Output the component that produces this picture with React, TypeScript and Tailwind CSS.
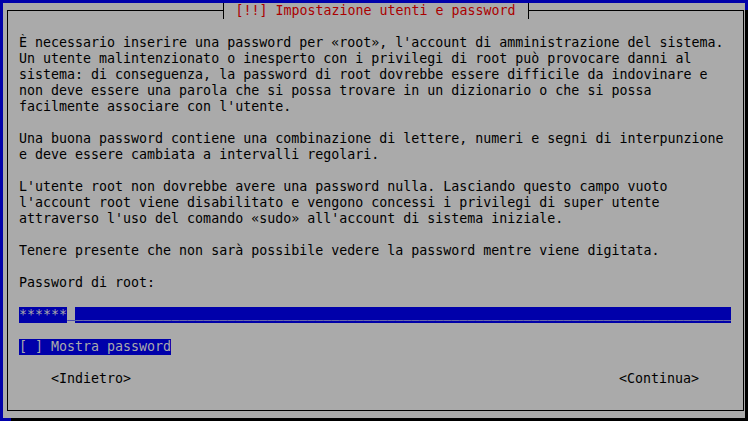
const intro = [
	"È necessario inserire una password per «root», l'account di amministrazione del sistema.",
	"Un utente malintenzionato o inesperto con i privilegi di root può provocare danni al",
	"sistema: di conseguenza, la password di root dovrebbe essere difficile da indovinare e",
	"non deve essere una parola che si possa trovare in un dizionario o che si possa",
	"facilmente associare con l'utente.",
	"",
	"Una buona password contiene una combinazione di lettere, numeri e segni di interpunzione",
	"e deve essere cambiata a intervalli regolari.",
	"",
	"L'utente root non dovrebbe avere una password nulla. Lasciando questo campo vuoto",
	"l'account root viene disabilitato e vengono concessi i privilegi di super utente",
	"attraverso l'uso del comando «sudo» all'account di sistema iniziale.",
	"",
	"Tenere presente che non sarà possibile vedere la password mentre viene digitata.",
	"",
	"Password di root:",
	"",
];

function Line({ text }: { text: string }) {
	return <div className="h-4 whitespace-pre">{text}</div>;
}

export default function App() {
	return (
		<div className="h-[421px] w-[748px] overflow-hidden bg-[#0000aa] pt-[3px] pl-[3px] font-['DejaVu_Sans_Mono',monospace] text-[13.3px] leading-4">
			<div className="h-[415px] w-[742px] bg-[#aaaaaa] pt-[7px] pl-[4px] shadow-[6px_5px_0_-2px_#000]">
				<div className="flex h-[401px] w-[737px] flex-col border border-black">
					{/* title sits on the top border */}
					<div className="-mt-[8px] flex h-4 justify-center">
						<div className="flex h-4 w-2">
							<div className="w-[4px]" />
							<div className="h-4 w-px bg-black" />
							<div className="flex-1 bg-[#aaaaaa]" />
						</div>
						<div className="whitespace-pre bg-[#aaaaaa] px-2 text-[#aa0000]">
							[!!] Impostazione utenti e password
						</div>
						<div className="flex h-4 w-2">
							<div className="w-[4px] bg-[#aaaaaa]" />
							<div className="h-4 w-px bg-black" />
							<div className="flex-1" />
						</div>
					</div>

					<div className="mt-4 pl-[11px] text-black">
						{intro.map((l, i) => (
							<Line key={i} text={l} />
						))}

						<div className="flex h-4 w-[712px] items-start bg-[#0000aa] text-[#aaaaaa]">
							<span className="whitespace-pre">******</span>
							<span className="h-4 bg-[#aaaaaa] text-[#0000aa]">
								<span className="-mt-[2px] block h-4">_</span>
							</span>
							<span className="-mt-[2px] whitespace-pre">{"_".repeat(82)}</span>
						</div>

						<Line text="" />
						<div className="flex h-4">
							<span className="whitespace-pre bg-[#0000aa] text-[#aaaaaa]">
								[ ] Mostra password
							</span>
						</div>
						<Line text="" />

						<div className="ml-[32px] flex h-4 w-[648px] justify-between">
							<span>&lt;Indietro&gt;</span>
							<span>&lt;Continua&gt;</span>
						</div>
					</div>
				</div>
			</div>
		</div>
	);
}
